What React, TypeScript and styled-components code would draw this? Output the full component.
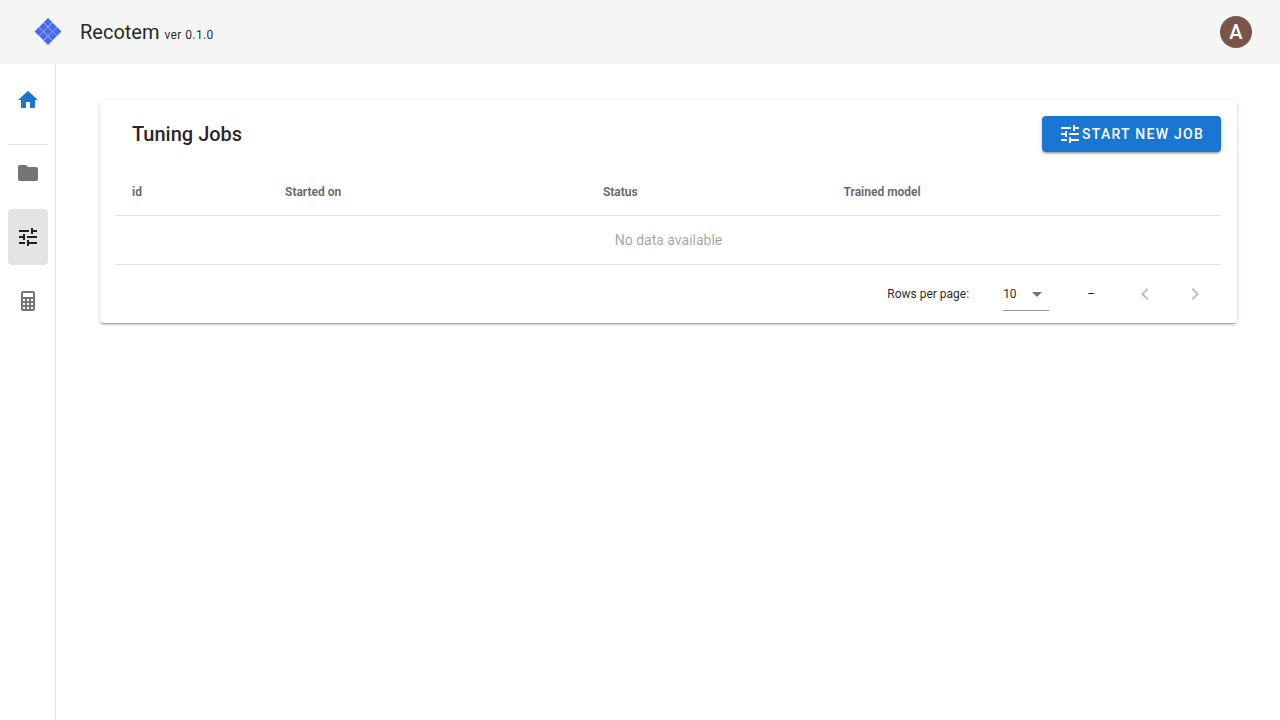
import React from "react";
import styled, { createGlobalStyle } from "styled-components";

const GlobalStyle = createGlobalStyle`
  *, *::before, *::after { box-sizing: border-box; }
  body {
    margin: 0;
    background: #fff;
    color: rgba(0, 0, 0, 0.87);
    font-family: Roboto, "Liberation Sans", sans-serif;
    font-size: 16px;
    line-height: 24px;
  }
`;

const paths = {
  home: "M10,20V14H14V20H19V12H22L12,3L2,12H5V20H10Z",
  folder:
    "M10,4H4C2.89,4 2,4.89 2,6V18A2,2 0 0,0 4,20H20A2,2 0 0,0 22,18V8C22,6.89 21.1,6 20,6H12L10,4Z",
  tune: "M3,17V19H9V17H3M3,5V7H13V5H3M13,21V19H21V17H13V15H11V21H13M7,9V11H3V13H7V15H9V9H7M21,13V11H11V13H21M15,9H17V7H21V5H17V3H15V9Z",
  calculator:
    "M7,2H17A2,2 0 0,1 19,4V20A2,2 0 0,1 17,22H7A2,2 0 0,1 5,20V4A2,2 0 0,1 7,2M7,4V8H17V4H7M7,10V12H9V10H7M11,10V12H13V10H11M15,10V12H17V10H15M7,14V16H9V14H7M11,14V16H13V14H11M15,14V16H17V14H15M7,18V20H9V18H7M11,18V20H13V18H11M15,18V20H17V18H15Z",
  menuDown: "M7,10L12,15L17,10H7Z",
  chevronLeft: "M15.41,16.58L10.83,12L15.41,7.41L14,6L8,12L14,18L15.41,16.58Z",
  chevronRight: "M8.59,16.58L13.17,12L8.59,7.41L10,6L16,12L10,18L8.59,16.58Z",
};

const Svg = styled.svg`
  display: block;
  flex: none;
  width: 24px;
  height: 24px;
  fill: currentColor;
`;

function Icon({ name }: { name: keyof typeof paths }) {
  return (
    <Svg viewBox="0 0 24 24" aria-hidden="true">
      <path d={paths[name]} />
    </Svg>
  );
}

const Page = styled.div`
  display: flex;
  flex-direction: column;
  min-height: 100vh;
`;

const AppBar = styled.header`
  display: flex;
  align-items: center;
  justify-content: space-between;
  height: 64px;
  padding: 0 28px 0 32px;
  background: #f5f5f5;
`;

const Brand = styled.div`
  display: flex;
  align-items: center;
  gap: 16px;
`;

const LogoSvg = styled.svg`
  display: block;
  width: 32px;
  height: 32px;
`;

const BrandName = styled.div`
  padding-top: 2px;
  font-size: 20px;
  line-height: 30px;
`;

const Version = styled.span`
  font-size: 12px;
  letter-spacing: 0.0333em;
`;

const Avatar = styled.button`
  width: 32px;
  height: 32px;
  padding: 0;
  border: 0;
  border-radius: 50%;
  background: #795548;
  color: #fff;
  font: 500 20px/32px Roboto, sans-serif;
  text-align: center;
  cursor: pointer;
`;

const Body = styled.div`
  display: flex;
  flex: 1;
`;

const Sidebar = styled.nav`
  flex: none;
  width: 56px;
  border-right: 1px solid rgba(0, 0, 0, 0.12);
`;

const NavGroup = styled.div<{ $first?: boolean }>`
  display: flex;
  flex-direction: column;
  gap: 8px;
  padding: ${(p) => (p.$first ? "8px 7px 16px 8px" : "0 7px 0 8px")};
`;

const NavDivider = styled.hr`
  height: 1px;
  margin: 0 7px 0 8px;
  border: 0;
  background: rgba(0, 0, 0, 0.12);
`;

const NavLink = styled.a<{ $color?: string; $active?: boolean }>`
  display: flex;
  align-items: center;
  justify-content: center;
  height: 56px;
  border-radius: 4px;
  color: ${(p) => p.$color ?? "#757575"};
  background: ${(p) => (p.$active ? "#e4e4e4" : "transparent")};
`;

const Main = styled.main`
  flex: 1;
  min-width: 0;
  padding: 36px 43px 36px 44px;
`;

const Card = styled.section`
  padding: 0 16px;
  border-radius: 4px;
  background: #fff;
  box-shadow: 0 3px 1px -2px rgba(0, 0, 0, 0.2), 0 2px 2px 0 rgba(0, 0, 0, 0.14),
    0 1px 5px 0 rgba(0, 0, 0, 0.12);
`;

const CardHeader = styled.div`
  display: flex;
  align-items: center;
  justify-content: space-between;
  padding: 16px 0 16px 16px;
`;

const CardTitle = styled.h1`
  margin: 0;
  font-size: 20px;
  line-height: 32px;
  font-weight: 500;
`;

const PrimaryButton = styled.button`
  display: flex;
  align-items: center;
  height: 36px;
  padding: 0 17px 0 16px;
  border: 0;
  border-radius: 4px;
  background: #1976d2;
  color: #fff;
  font: 500 14px/20px Roboto, sans-serif;
  letter-spacing: 0.09em;
  text-transform: uppercase;
  cursor: pointer;
  box-shadow: 0 3px 1px -2px rgba(0, 0, 0, 0.2), 0 2px 2px 0 rgba(0, 0, 0, 0.14),
    0 1px 5px 0 rgba(0, 0, 0, 0.12);
`;

const Table = styled.table`
  width: 100%;
  border-spacing: 0;
`;

const HeadCell = styled.th`
  height: 48px;
  padding: 0 16px;
  border-bottom: 1px solid rgba(0, 0, 0, 0.12);
  color: rgba(0, 0, 0, 0.6);
  font-size: 12px;
  font-weight: 700;
  text-align: left;

  &:first-child {
    width: 153px;
  }
`;

const EmptyCell = styled.td`
  height: 48px;
  padding: 0 16px;
  color: rgba(0, 0, 0, 0.38);
  font-size: 14px;
  text-align: center;
`;

const TableFooter = styled.div`
  display: flex;
  align-items: center;
  justify-content: flex-end;
  height: 59px;
  padding-right: 8px;
  border-top: 1px solid rgba(0, 0, 0, 0.12);
  font-size: 12px;
`;

const SelectWrap = styled.div`
  position: relative;
  width: 46px;
  height: 34px;
  margin-left: 34px;
`;

const Select = styled.select`
  appearance: none;
  width: 100%;
  height: 100%;
  padding: 0;
  border: 0;
  border-bottom: 1px solid rgba(0, 0, 0, 0.42);
  border-radius: 0;
  background: transparent;
  color: inherit;
  font: 400 12px/16px Roboto, sans-serif;
`;

const Caret = styled.span`
  position: absolute;
  top: 5px;
  right: 0;
  color: rgba(0, 0, 0, 0.54);
  pointer-events: none;
`;

const Range = styled.span`
  margin: 0 32px 0 38px;
`;

const PageButton = styled.button`
  display: flex;
  align-items: center;
  justify-content: center;
  width: 36px;
  height: 36px;
  padding: 0;
  border: 0;
  border-radius: 50%;
  background: transparent;
  color: rgba(0, 0, 0, 0.26);
`;

const Pager = styled.div`
  display: flex;
  gap: 14px;
`;

function Logo() {
  const cells = [0, 1, 2];
  return (
    <LogoSvg viewBox="-16 -16 32 32" aria-hidden="true">
      <g transform="translate(0 -0.5) rotate(45)">
        <rect x="-9.5" y="-9.5" width="19" height="19" fill="#c3cdfb" />
        {cells.map((row) =>
          cells.map((col) => (
            <rect
              key={`${row}-${col}`}
              x={-9.5 + col * 6.5}
              y={-9.5 + row * 6.5}
              width="6"
              height="6"
              fill="#476af6"
            />
          ))
        )}
      </g>
    </LogoSvg>
  );
}

const columns = ["id", "Started on", "Status", "Trained model"];

export default function App() {
  return (
    <Page>
      <GlobalStyle />
      <AppBar>
        <Brand>
          <Logo />
          <BrandName>
            Recotem <Version>ver 0.1.0</Version>
          </BrandName>
        </Brand>
        <Avatar type="button">A</Avatar>
      </AppBar>
      <Body>
        <Sidebar>
          <NavGroup $first>
            <NavLink href="#home" aria-label="Home" $color="#1976d2">
              <Icon name="home" />
            </NavLink>
          </NavGroup>
          <NavDivider />
          <NavGroup>
            <NavLink href="#data" aria-label="Data">
              <Icon name="folder" />
            </NavLink>
            <NavLink href="#tuning" aria-label="Tuning" $color="#212121" $active>
              <Icon name="tune" />
            </NavLink>
            <NavLink href="#models" aria-label="Models">
              <Icon name="calculator" />
            </NavLink>
          </NavGroup>
        </Sidebar>
        <Main>
          <Card>
            <CardHeader>
              <CardTitle>Tuning Jobs</CardTitle>
              <PrimaryButton type="button">
                <Icon name="tune" />
                Start new job
              </PrimaryButton>
            </CardHeader>
            <Table>
              <thead>
                <tr>
                  {columns.map((name) => (
                    <HeadCell key={name} scope="col">
                      {name}
                    </HeadCell>
                  ))}
                </tr>
              </thead>
              <tbody>
                <tr>
                  <EmptyCell colSpan={columns.length}>No data available</EmptyCell>
                </tr>
              </tbody>
            </Table>
            <TableFooter>
              <label htmlFor="rows-per-page">Rows per page:</label>
              <SelectWrap>
                <Select id="rows-per-page" defaultValue="10">
                  <option>5</option>
                  <option>10</option>
                  <option>15</option>
                </Select>
                <Caret>
                  <Icon name="menuDown" />
                </Caret>
              </SelectWrap>
              <Range>–</Range>
              <Pager>
                <PageButton type="button" aria-label="Previous page" disabled>
                  <Icon name="chevronLeft" />
                </PageButton>
                <PageButton type="button" aria-label="Next page" disabled>
                  <Icon name="chevronRight" />
                </PageButton>
              </Pager>
            </TableFooter>
          </Card>
        </Main>
      </Body>
    </Page>
  );
}
